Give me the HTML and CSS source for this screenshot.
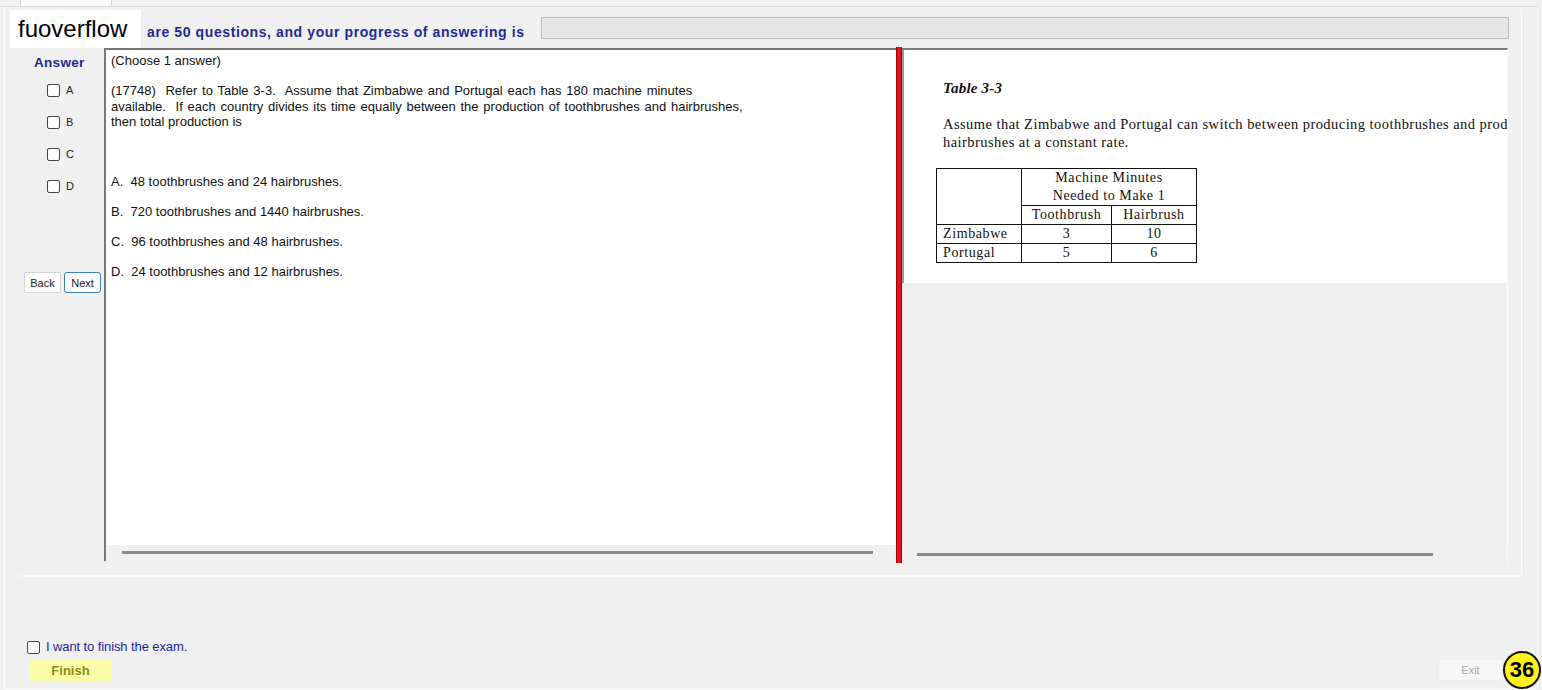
FILE: index.html
```html
<!DOCTYPE html>
<html>
<head>
    <title>Exam</title>
    <link rel="stylesheet" href="styles.css">
</head>
<body>
    <div class="topstrip"><div class="tab"></div></div>
    <div class="window">
        <div class="group">
            <div class="header">
                <div class="intro">are 50 questions, and your progress of answering is</div>
                <div class="progress"></div>
            </div>
            <div class="main">
                <div class="side">
                    <div class="answer-title">Answer</div>
                    <div class="choice"><span class="box"></span>A</div>
                    <div class="choice"><span class="box"></span>B</div>
                    <div class="choice"><span class="box"></span>C</div>
                    <div class="choice"><span class="box"></span>D</div>
                    <div class="nav">
                        <button class="btn">Back</button>
                        <button class="btn focus">Next</button>
                    </div>
                </div>
                <div class="question">
                    <div class="qbody">
                        <div class="choose">(Choose 1 answer)</div>
                        <div class="qtext">
                            <div class="qline l1">(17748)&nbsp; Refer to Table 3-3.&nbsp; Assume that Zimbabwe and Portugal each has 180 machine minutes</div>
                            <div class="qline l2">available.&nbsp; If each country divides its time equally between the production of toothbrushes and hairbrushes,</div>
                            <div class="qline">then total production is</div>
                        </div>
                        <div class="options">
                            <div class="opt">A.&nbsp; 48 toothbrushes and 24 hairbrushes.</div>
                            <div class="opt">B.&nbsp; 720 toothbrushes and 1440 hairbrushes.</div>
                            <div class="opt">C.&nbsp; 96 toothbrushes and 48 hairbrushes.</div>
                            <div class="opt">D.&nbsp; 24 toothbrushes and 12 hairbrushes.</div>
                        </div>
                    </div>
                    <div class="hscroll"><div class="thumb left-thumb"></div></div>
                </div>
                <div class="splitter"></div>
                <div class="exhibit">
                    <div class="doc">
                        <div class="doc-title">Table 3-3</div>
                        <div class="doc-para">
                            <div class="nowrap">Assume that Zimbabwe and Portugal can switch between producing toothbrushes and producing</div>
                            <div>hairbrushes at a constant rate.</div>
                        </div>
                        <table class="data">
                            <tr>
                                <td rowspan="2" class="c1"></td>
                                <td colspan="2">Machine Minutes<br>Needed to Make 1</td>
                            </tr>
                            <tr>
                                <td class="c2">Toothbrush</td>
                                <td class="c3">Hairbrush</td>
                            </tr>
                            <tr>
                                <td class="left">Zimbabwe</td>
                                <td>3</td>
                                <td>10</td>
                            </tr>
                            <tr>
                                <td class="left">Portugal</td>
                                <td>5</td>
                                <td>6</td>
                            </tr>
                        </table>
                    </div>
                    <div class="gray-area"></div>
                    <div class="hscroll"><div class="thumb right-thumb"></div></div>
                </div>
            </div>
        </div>
        <div class="footer">
            <div class="finish-block">
                <div class="finish-check"><span class="box"></span>I want to finish the exam.</div>
                <button class="finish">Finish</button>
            </div>
            <button class="exit">Exit</button>
        </div>
    </div>

    <div class="watermark">fuoverflow</div>
    <div class="badge">36</div>
</body>
</html>
```

FILE: styles.css
```css
body {
    margin: 0;
    width: 1542px;
    height: 690px;
    overflow: hidden;
    background-color: #f0f0f0;
    font-family: "Liberation Sans", Arial, sans-serif;
    font-size: 12px;
    color: #111;
    position: relative;
}
.topstrip {
    height: 6px;
    border-bottom: 1px solid #dadada;
    margin: 0 4px 0 0;
}
.tab {
    margin-left: 20px;
    width: 90px;
    height: 6px;
    background: #fafafa;
    border: 1px solid #d6d6d6;
    border-top: none;
    border-bottom: none;
}
.window {
    margin: 0 4px;
    height: 682px;
    border-left: 1px solid #fbfbfb;
    border-right: 1px solid #fbfbfb;
    border-bottom: 1px solid #fbfbfb;
    box-sizing: border-box;
    padding: 3px 0 0 15px;
}
.group {
    width: 1502px;
    height: 567px;
    box-sizing: border-box;
    border-right: 1px solid #fdfdfd;
    border-bottom: 2px solid #f8f8f8;
    display: flex;
    flex-direction: column;
}
.header {
    height: 38px;
    display: flex;
    align-items: flex-start;
    padding-left: 127px;
}
.intro {
    margin-top: 14px;
    font-size: 14px;
    line-height: 16px;
    font-weight: bold;
    letter-spacing: 0.6px;
    color: #1d2a96;
    white-space: nowrap;
}
.progress {
    margin-left: auto;
    margin-right: 12px;
    margin-top: 7px;
    width: 968px;
    height: 22px;
    box-sizing: border-box;
    background: #e6e6e6;
    border: 1px solid #bcbcbc;
}
.main {
    display: flex;
    height: 515px;
}
.side {
    width: 84px;
    display: flex;
    flex-direction: column;
}
.answer-title {
    margin-top: 7px;
    padding-left: 14px;
    font-size: 13.5px;
    line-height: 16px;
    font-weight: bold;
    letter-spacing: 0.3px;
    color: #1d2a96;
}
.choice {
    height: 32px;
    display: flex;
    align-items: center;
    padding-left: 27px;
    font-size: 11px;
    color: #222;
}
.answer-title + .choice {
    margin-top: 3px;
}
.box {
    display: inline-block;
    width: 13px;
    height: 13px;
    box-sizing: border-box;
    border: 1px solid #444;
    border-radius: 2px;
    background: #fff;
    margin-right: 6px;
}
.nav {
    margin-top: 70px;
    padding-left: 4px;
    display: flex;
    gap: 3px;
}
.btn {
    width: 37px;
    height: 21px;
    padding: 0;
    font-family: "Liberation Sans", Arial, sans-serif;
    font-size: 11px;
    color: #222;
    background: #fdfdfd;
    border: 1px solid #d4d4d4;
    border-radius: 2px;
}
.btn.focus {
    border-color: #3a7fb4;
    border-radius: 3px;
}
.question {
    width: 792px;
    height: 513px;
    box-sizing: border-box;
    border-left: 2px solid #777;
    border-top: 2px solid #777;
    background: #fff;
    display: flex;
    flex-direction: column;
}
.qbody {
    flex: 1;
    padding: 3px 0 0 5px;
    font-size: 13px;
}
.choose {
    line-height: 16px;
}
.qtext {
    margin-top: 14px;
    line-height: 15.5px;
}
.qline {
    white-space: nowrap;
}
.l1 {
    word-spacing: 1.2px;
}
.l2 {
    word-spacing: 1.2px;
}
.options {
    margin-top: 44px;
}
.opt {
    line-height: 16px;
    margin-bottom: 14px;
}
.hscroll {
    height: 16px;
    background: #f0f0f0;
    position: relative;
    flex-shrink: 0;
}
.thumb {
    position: absolute;
    top: 6px;
    height: 3px;
    background: #8a8a8a;
}
.left-thumb {
    left: 16px;
    width: 751px;
}
.right-thumb {
    left: 15px;
    width: 516px;
}
.splitter {
    width: 6px;
    margin-top: -1px;
    box-sizing: border-box;
    background: #e0141a;
    border-left: 1px solid #a40000;
    border-right: 1px solid #8c0a0a;
}
.exhibit {
    width: 606px;
    box-sizing: border-box;
    border-top: 2px solid #7a7a7a;
    border-right: 1px solid #fafafa;
    background: #efefef;
    display: flex;
    flex-direction: column;
}
.doc {
    height: 233px;
    background: #fff;
    overflow: hidden;
    border-left: 2px solid #9a9a9a;
    padding: 29px 0 0 39px;
    box-sizing: border-box;
    font-family: "Liberation Serif", "Times New Roman", serif;
    font-size: 14px;
    color: #111;
}
.doc-title {
    font-weight: bold;
    font-style: italic;
    font-size: 15px;
    line-height: 18px;
    letter-spacing: 0.2px;
}
.doc-para {
    margin-top: 18px;
    line-height: 18px;
    font-size: 14.5px;
    letter-spacing: 0.45px;
}
.nowrap {
    white-space: nowrap;
}
.data {
    margin: 17px 0 0 -7px;
    border-collapse: collapse;
    font-size: 14px;
    line-height: 18px;
    letter-spacing: 0.6px;
}
.data td {
    border: 1px solid #111;
    padding: 0;
    height: 18px;
    text-align: center;
}
.data td.left {
    text-align: left;
    padding-left: 6px;
}
.c1 {
    width: 84px;
}
.c2 {
    width: 89px;
}
.c3 {
    width: 84px;
}
.gray-area {
    flex: 1;
}
.footer {
    margin-top: 63px;
    display: flex;
    justify-content: space-between;
    align-items: flex-end;
    width: 1502px;
}
.finish-block {
    display: flex;
    flex-direction: column;
}
.finish-check {
    display: flex;
    align-items: center;
    padding-left: 7px;
    color: #1f1fa0;
    font-size: 13px;
    line-height: 14px;
    letter-spacing: -0.1px;
}
.finish-check .box {
    margin-right: 6px;
}
.finish {
    margin: 6px 0 0 9px;
    width: 83px;
    height: 21px;
    padding: 0;
    border: none;
    background: #fdfca6;
    color: #8a8a14;
    font-family: "Liberation Sans", Arial, sans-serif;
    font-size: 13px;
    font-weight: bold;
}
.exit {
    margin-right: 19px;
    width: 65px;
    height: 22px;
    padding: 0;
    border: 1px solid #ececec;
    background: #f6f6f6;
    color: #a8a8a8;
    font-family: "Liberation Sans", Arial, sans-serif;
    font-size: 11px;
}
.watermark {
    position: absolute;
    left: 10px;
    top: 10px;
    width: 131px;
    height: 38px;
    background: #fff;
    font-size: 24px;
    line-height: 38px;
    color: #000;
    padding-left: 8px;
    box-sizing: border-box;
}
.badge {
    position: absolute;
    left: 1503px;
    top: 651px;
    width: 38px;
    height: 38px;
    box-sizing: border-box;
    border: 2px solid #111;
    border-radius: 50%;
    background: #ffef1a;
    font-size: 22px;
    font-weight: bold;
    line-height: 34px;
    text-align: center;
    color: #000;
}
```
